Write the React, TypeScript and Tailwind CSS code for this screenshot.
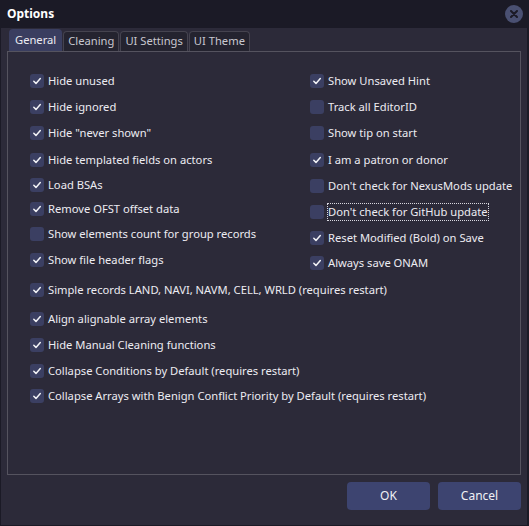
import React from "react";

const font = { fontFamily: '"Noto Sans", "Open Sans", sans-serif' };

function Check({ checked }: { checked: boolean }) {
  return (
    <span className="w-[14px] h-[14px] rounded-[3px] bg-[#3b3f62] flex items-center justify-center shrink-0">
      {checked && (
        <svg width="10" height="10" viewBox="0 0 10 10">
          <path d="M1.8 5.2 L4 7.4 L8.3 2.6" stroke="#f2f2f6" strokeWidth="1.5" fill="none" strokeLinecap="round" strokeLinejoin="round" />
        </svg>
      )}
    </span>
  );
}

function Item({ label, checked, cls, focus }: { label: string; checked: boolean; cls: string; focus?: boolean }) {
  return (
    <div className={"flex items-center gap-[4px] " + cls}>
      <Check checked={checked} />
      <span className={"text-[11.2px] leading-[16px] text-[#ececf2] whitespace-nowrap " + (focus ? "outline outline-1 outline-dotted outline-[#d8d8e0]" : "")}>{label}</span>
    </div>
  );
}

export default function App() {
  const left: [string, boolean, string][] = [
    ["Hide unused", true, "h-[26px]"],
    ["Hide ignored", true, "h-[26px]"],
    ["Hide \"never shown\"", true, "h-[26px]"],
    ["Hide templated fields on actors", true, "h-[27px]"],
    ["Load BSAs", true, "h-[24px]"],
    ["Remove OFST offset data", true, "h-[24px]"],
    ["Show elements count for group records", false, "h-[26px]"],
    ["Show file header flags", true, "h-[26px]"],
  ];
  const right: [string, boolean, string][] = [
    ["Show Unsaved Hint", true, "h-[26px]"],
    ["Track all EditorID", false, "h-[26px]"],
    ["Show tip on start", false, "h-[26px]"],
    ["I am a patron or donor", true, "h-[27px]"],
    ["Don't check for NexusMods update", false, "h-[26px]"],
    ["Don't check for GitHub update", false, "h-[26px]"],
    ["Reset Modified (Bold) on Save", true, "h-[25px]"],
    ["Always save ONAM", true, "h-[26px]"],
  ];
  const full: [string, boolean, string][] = [
    ["Simple records LAND, NAVI, NAVM, CELL, WRLD (requires restart)", true, "h-[26px]"],
    ["Align alignable array elements", true, "h-[26px] mt-[3px]"],
    ["Hide Manual Cleaning functions", true, "h-[26px]"],
    ["Collapse Conditions by Default (requires restart)", true, "h-[25px]"],
    ["Collapse Arrays with Benign Conflict Priority by Default (requires restart)", true, "h-[26px]"],
  ];
  return (
    <div style={font} className="w-[529px] h-[526px] bg-[#1b1a26] flex flex-col overflow-hidden">
      <div className="h-[28px] flex items-center justify-between pl-[7px] pr-[6px] shrink-0">
        <span className="text-[12px] font-bold text-white">Options</span>
        <span className="w-[18px] h-[18px] rounded-full bg-[#4a5072] flex items-center justify-center">
          <svg width="8" height="8" viewBox="0 0 8 8">
            <path d="M1 1 L7 7 M7 1 L1 7" stroke="#1b1a26" strokeWidth="2" strokeLinecap="round" />
          </svg>
        </span>
      </div>
      <div className="flex-1 bg-[#2c2a39] ml-[1px] mr-[2px] mb-[1px] flex flex-col px-[6px]">
        <div className="flex items-end h-[22px] mt-[1px] pl-[2px] gap-[1px]">
          <div className="h-[22px] px-[6px] rounded-t-[4px] bg-[#3a3e60] text-[11.2px] text-[#ececf2] flex items-center">General</div>
          <div className="h-[20px] px-[4px] rounded-t-[4px] bg-[#24232f] border border-b-0 border-[#45434f] text-[11.2px] text-[#c8c8d0] flex items-center">Cleaning</div>
          <div className="h-[20px] px-[4px] rounded-t-[4px] bg-[#24232f] border border-b-0 border-[#45434f] text-[11.2px] text-[#c8c8d0] flex items-center">UI Settings</div>
          <div className="h-[20px] px-[4px] rounded-t-[4px] bg-[#24232f] border border-b-0 border-[#45434f] text-[11.2px] text-[#c8c8d0] flex items-center">UI Theme</div>
        </div>
        <div className="h-[424px] border border-[#55535f] pl-[22px] pt-[16px]">
          <div className="flex">
            <div className="w-[280px] flex flex-col">
              {left.map(([l, c, h]) => (
                <Item key={l} label={l} checked={c} cls={h} />
              ))}
            </div>
            <div className="flex flex-col">
              {right.map(([l, c, h]) => (
                <Item key={l} label={l} checked={c} cls={h} focus={l.includes("GitHub")} />
              ))}
            </div>
          </div>
          <div className="flex flex-col mt-[1px]">
            {full.map(([l, c, h]) => (
              <Item key={l} label={l} checked={c} cls={h} />
            ))}
          </div>
        </div>
        <div className="flex justify-end gap-[8px] mt-[7px]">
          <button className="w-[83px] h-[28px] rounded-[4px] bg-[#3d4470] text-[12px] text-[#f0f0f4]">OK</button>
          <button className="w-[83px] h-[28px] rounded-[4px] bg-[#3d4470] text-[12px] text-[#f0f0f4]">Cancel</button>
        </div>
      </div>
    </div>
  );
}
